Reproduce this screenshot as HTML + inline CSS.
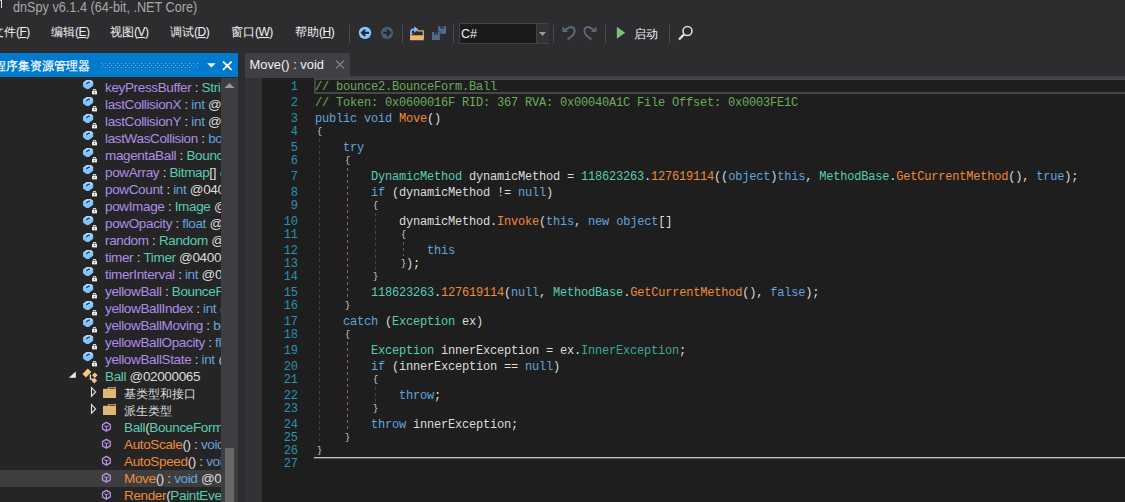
<!DOCTYPE html>
<html><head><meta charset="utf-8"><style>
html,body{margin:0;padding:0}
body{width:1125px;height:502px;overflow:hidden;position:relative;background:#2d2d30;font-family:"Liberation Sans",sans-serif}
.a{position:absolute}
.sep{position:absolute;width:1px;background:#4a4a4f}
.menu{position:absolute;top:23px;font-size:12px;line-height:18px;color:#f1f1f1;white-space:nowrap}
.menu u{text-decoration:underline}
.menu i{font-style:normal;letter-spacing:-0.5px}
.tr{position:absolute;left:0;width:221px;height:17px;overflow:hidden;white-space:nowrap}
.tt{position:absolute;top:0px;font-size:13.5px;letter-spacing:-0.35px;line-height:17px}
.cl{position:absolute;left:315px;white-space:pre;font-family:"Liberation Mono",monospace;font-size:12px;line-height:20px;letter-spacing:-0.2px}
.br{display:inline-block;font-weight:normal;transform:translate(1px,-1px) scale(0.72,0.76);transform-origin:50% 75%}
.ln{position:absolute;left:262.7px;width:35px;text-align:right;font-family:"Liberation Mono",monospace;font-size:12px;line-height:20px;letter-spacing:-0.2px;color:#2b91af}
</style></head><body>

<div class="a" style="left:1px;top:0;width:1.2px;height:8px;background:#e6e6e6"></div><div class="a" style="left:0;top:0;width:2px;height:1px;background:#cfcfcf"></div>
<div class="a" style="left:12.5px;top:0px;font-size:14px;line-height:15px;color:#a8a8a8;transform:scaleX(0.905);transform-origin:0 0;white-space:nowrap">dnSpy v6.1.4 (64-bit, .NET Core)</div>
<div class="menu" style="left:-8px">文件<i>(<u>F</u>)</i></div>
<div class="menu" style="left:51px">编辑<i>(<u>E</u>)</i></div>
<div class="menu" style="left:110px">视图<i>(<u>V</u>)</i></div>
<div class="menu" style="left:170px">调试<i>(<u>D</u>)</i></div>
<div class="menu" style="left:231px">窗口<i>(<u>W</u>)</i></div>
<div class="menu" style="left:295px">帮助<i>(<u>H</u>)</i></div>
<div class="sep" style="left:349px;top:25px;height:18px"></div>
<div class="sep" style="left:402px;top:25px;height:18px"></div>
<div class="sep" style="left:453px;top:25px;height:18px"></div>
<div class="sep" style="left:553px;top:25px;height:18px"></div>
<div class="sep" style="left:605px;top:25px;height:18px"></div>
<div class="sep" style="left:669px;top:25px;height:18px"></div>
<svg class="a" style="left:356px;top:25px" width="18" height="17" viewBox="0 0 18 17">
<circle cx="9" cy="7.85" r="6.2" fill="#86c6fb"/><path d="M13 7.85H6.5M9.2 4.8L6 7.85l3.2 3.05" stroke="#1e2a38" stroke-width="2.1" fill="none"/></svg>
<svg class="a" style="left:378px;top:25px" width="18" height="17" viewBox="0 0 18 17">
<circle cx="9.1" cy="7.85" r="6.1" fill="#4c5d70"/><path d="M5.2 7.85H11.6M8.9 4.8l3.2 3.05-3.2 3.05" stroke="#232a33" stroke-width="2.1" fill="none"/></svg>
<svg class="a" style="left:409px;top:25px" width="16" height="16" viewBox="0 0 16 16">
<path d="M1.7 15V8.6H3.6M8.2 5.8H14.3V10.4" stroke="#e3b06c" stroke-width="1.2" fill="none"/><path d="M1.2 10.2H15.2L14.6 15.2H1.2z" fill="#eab872"/>
<path d="M2 9.6V6.8Q2 4.4 4.5 4.4H6" stroke="#7cc0fa" stroke-width="1.7" fill="none"/><path d="M5.2 1.2L9.3 4.5L5.2 7.8z" fill="#7cc0fa"/></svg>
<svg class="a" style="left:431px;top:25px" width="16" height="16" viewBox="0 0 16 16">
<path d="M7.2 1h7.8v7.8H7.2z" fill="#4f6d8c"/><path d="M9.2 1h3.8v2.6H9.2z" fill="#2d2d30"/><path d="M10.6 1.3h1v1.6h-1z" fill="#4f6d8c"/>
<path d="M0.6 6.6h8.6v8.8H0.6z" fill="#2d2d30"/><path d="M1 7h7.8v8H1z" fill="#4f6d8c"/><path d="M3 7h3.8v2.6H3z" fill="#2d2d30"/><path d="M4.4 7.3h1v1.6h-1z" fill="#4f6d8c"/></svg>
<div class="a" style="left:459px;top:23px;width:90px;height:21px;box-sizing:border-box;border:1px solid #434346;background:#1b1b1c"></div>
<div class="a" style="left:536px;top:24px;width:12px;height:19px;background:#333337;border-left:1px solid #434346"></div>
<svg class="a" style="left:539px;top:32px" width="8" height="5"><path d="M0 0h7l-3.5 4z" fill="#999"/></svg>
<div class="a" style="left:461px;top:26px;font-size:12.5px;line-height:17px;color:#f1f1f1">C#</div>
<svg class="a" style="left:561px;top:25px" width="16" height="16" viewBox="0 0 16 16"><path d="M4.6 5.2Q7.2 1.9 10.4 2Q13.6 2.3 13.6 6.3Q13.4 8.6 11.4 10.6L6.6 14.6" stroke="#56687b" stroke-width="2" fill="none"/><path d="M1.5 1.3V6.9H7.1z" fill="#56687b"/></svg>
<svg class="a" style="left:582px;top:25px" width="16" height="16" viewBox="0 0 16 16"><g transform="translate(16,0) scale(-1,1)"><path d="M4.6 5.2Q7.2 1.9 10.4 2Q13.6 2.3 13.6 6.3Q13.4 8.6 11.4 10.6L6.6 14.6" stroke="#56687b" stroke-width="2" fill="none"/><path d="M1.5 1.3V6.9H7.1z" fill="#56687b"/></g></svg>
<svg class="a" style="left:616px;top:26px" width="10" height="14"><path d="M0.8 0.8L9.2 6.8L0.8 12.8z" fill="#78c378"/></svg>
<div class="a" style="left:634px;top:25px;font-size:12px;line-height:18px;color:#f1f1f1">启动</div>
<svg class="a" style="left:677px;top:25px" width="17" height="16" viewBox="0 0 17 16">
<circle cx="10.5" cy="6" r="4.5" stroke="#dcdcdc" stroke-width="1.6" fill="none"/><path d="M7.3 9.2L2 14.5" stroke="#dcdcdc" stroke-width="2.4"/></svg>
<div class="a" style="left:0;top:53px;width:238px;height:24px;background:#007acc;overflow:hidden">
<div class="a" style="left:-6px;top:5px;font-size:12.2px;line-height:17px;color:#fff;-webkit-text-stroke:0.2px #fff;white-space:nowrap">程序集资源管理器</div>
<svg class="a" style="left:101px;top:10px" width="98" height="5"><defs><pattern id="dp" width="4" height="4" patternUnits="userSpaceOnUse"><rect x="0" y="0" width="1" height="1" fill="#64b2ee"/><rect x="2" y="2" width="1" height="1" fill="#64b2ee"/></pattern></defs><rect width="98" height="5" fill="url(#dp)"/></svg>
<svg class="a" style="left:206.5px;top:9.5px" width="10" height="6"><path d="M0.2 0.2h8.4l-4.2 4.3z" fill="#fff"/></svg>
<svg class="a" style="left:221.5px;top:7.5px" width="11" height="10"><path d="M1 0.6l8.6 8.2M9.6 0.6l-8.6 8.2" stroke="#fff" stroke-width="1.8"/></svg>
</div>
<div class="a" style="left:0;top:77px;width:221px;height:425px;background:#252526"></div>
<div class="a" style="left:221px;top:78px;width:17px;height:424px;background:#3e3e42"></div>
<svg class="a" style="left:224px;top:82px" width="11" height="7"><path d="M0.5 6h10l-5-5z" fill="#999"/></svg>
<div class="a" style="left:225px;top:448px;width:9px;height:54px;background:#686868"></div>
<div class="tr" style="top:79px">
<svg class="a" style="left:82px;top:0px" width="16" height="16" viewBox="0 0 16 16">
<path d="M1 3.8L4.6 1h4.2L11.2 3v3.8L6.8 9.9H4.4L1 7.6z" fill="#7fc3ff"/><path d="M1 3.8L4.6 1h4.2L11.2 3L6.5 5.6z" fill="#a6d6ff"/><path d="M4.2 4.6L7.8 2.9" stroke="#1a3d66" stroke-width="1.5"/>
<path d="M9.3 11.2h6.2v4.6H9.3z" fill="#252526"/><path d="M10 11.8h5v3.6h-5z" fill="#ececec"/><path d="M10.9 10h3.2v1.8h-3.2z" fill="#ececec"/><path d="M11.5 10.8h2v0.9h-2z" fill="#3a3a3a"/><rect x="12.1" y="13" width="0.9" height="0.9" fill="#333"/></svg>
<div class="tt" style="left:105px"><span style="color:#ad8ee6">keyPressBuffer</span><span style="color:#dcdcdc">&#160;:&#160;</span><span style="color:#58ccb4">String&#160;@04000</span></div>
</div>
<div class="tr" style="top:96px">
<svg class="a" style="left:82px;top:0px" width="16" height="16" viewBox="0 0 16 16">
<path d="M1 3.8L4.6 1h4.2L11.2 3v3.8L6.8 9.9H4.4L1 7.6z" fill="#7fc3ff"/><path d="M1 3.8L4.6 1h4.2L11.2 3L6.5 5.6z" fill="#a6d6ff"/><path d="M4.2 4.6L7.8 2.9" stroke="#1a3d66" stroke-width="1.5"/>
<path d="M9.3 11.2h6.2v4.6H9.3z" fill="#252526"/><path d="M10 11.8h5v3.6h-5z" fill="#ececec"/><path d="M10.9 10h3.2v1.8h-3.2z" fill="#ececec"/><path d="M11.5 10.8h2v0.9h-2z" fill="#3a3a3a"/><rect x="12.1" y="13" width="0.9" height="0.9" fill="#333"/></svg>
<div class="tt" style="left:105px"><span style="color:#ad8ee6">lastCollisionX</span><span style="color:#dcdcdc">&#160;:&#160;</span><span style="color:#62a4dc">int</span><span style="color:#dcdcdc">&#160;@04000</span></div>
</div>
<div class="tr" style="top:113px">
<svg class="a" style="left:82px;top:0px" width="16" height="16" viewBox="0 0 16 16">
<path d="M1 3.8L4.6 1h4.2L11.2 3v3.8L6.8 9.9H4.4L1 7.6z" fill="#7fc3ff"/><path d="M1 3.8L4.6 1h4.2L11.2 3L6.5 5.6z" fill="#a6d6ff"/><path d="M4.2 4.6L7.8 2.9" stroke="#1a3d66" stroke-width="1.5"/>
<path d="M9.3 11.2h6.2v4.6H9.3z" fill="#252526"/><path d="M10 11.8h5v3.6h-5z" fill="#ececec"/><path d="M10.9 10h3.2v1.8h-3.2z" fill="#ececec"/><path d="M11.5 10.8h2v0.9h-2z" fill="#3a3a3a"/><rect x="12.1" y="13" width="0.9" height="0.9" fill="#333"/></svg>
<div class="tt" style="left:105px"><span style="color:#ad8ee6">lastCollisionY</span><span style="color:#dcdcdc">&#160;:&#160;</span><span style="color:#62a4dc">int</span><span style="color:#dcdcdc">&#160;@04000</span></div>
</div>
<div class="tr" style="top:130px">
<svg class="a" style="left:82px;top:0px" width="16" height="16" viewBox="0 0 16 16">
<path d="M1 3.8L4.6 1h4.2L11.2 3v3.8L6.8 9.9H4.4L1 7.6z" fill="#7fc3ff"/><path d="M1 3.8L4.6 1h4.2L11.2 3L6.5 5.6z" fill="#a6d6ff"/><path d="M4.2 4.6L7.8 2.9" stroke="#1a3d66" stroke-width="1.5"/>
<path d="M9.3 11.2h6.2v4.6H9.3z" fill="#252526"/><path d="M10 11.8h5v3.6h-5z" fill="#ececec"/><path d="M10.9 10h3.2v1.8h-3.2z" fill="#ececec"/><path d="M11.5 10.8h2v0.9h-2z" fill="#3a3a3a"/><rect x="12.1" y="13" width="0.9" height="0.9" fill="#333"/></svg>
<div class="tt" style="left:105px"><span style="color:#ad8ee6">lastWasCollision</span><span style="color:#dcdcdc">&#160;:&#160;</span><span style="color:#62a4dc">bool</span><span style="color:#dcdcdc">&#160;@04000</span></div>
</div>
<div class="tr" style="top:147px">
<svg class="a" style="left:82px;top:0px" width="16" height="16" viewBox="0 0 16 16">
<path d="M1 3.8L4.6 1h4.2L11.2 3v3.8L6.8 9.9H4.4L1 7.6z" fill="#7fc3ff"/><path d="M1 3.8L4.6 1h4.2L11.2 3L6.5 5.6z" fill="#a6d6ff"/><path d="M4.2 4.6L7.8 2.9" stroke="#1a3d66" stroke-width="1.5"/>
<path d="M9.3 11.2h6.2v4.6H9.3z" fill="#252526"/><path d="M10 11.8h5v3.6h-5z" fill="#ececec"/><path d="M10.9 10h3.2v1.8h-3.2z" fill="#ececec"/><path d="M11.5 10.8h2v0.9h-2z" fill="#3a3a3a"/><rect x="12.1" y="13" width="0.9" height="0.9" fill="#333"/></svg>
<div class="tt" style="left:105px"><span style="color:#ad8ee6">magentaBall</span><span style="color:#dcdcdc">&#160;:&#160;</span><span style="color:#58ccb4">BounceForm</span></div>
</div>
<div class="tr" style="top:164px">
<svg class="a" style="left:82px;top:0px" width="16" height="16" viewBox="0 0 16 16">
<path d="M1 3.8L4.6 1h4.2L11.2 3v3.8L6.8 9.9H4.4L1 7.6z" fill="#7fc3ff"/><path d="M1 3.8L4.6 1h4.2L11.2 3L6.5 5.6z" fill="#a6d6ff"/><path d="M4.2 4.6L7.8 2.9" stroke="#1a3d66" stroke-width="1.5"/>
<path d="M9.3 11.2h6.2v4.6H9.3z" fill="#252526"/><path d="M10 11.8h5v3.6h-5z" fill="#ececec"/><path d="M10.9 10h3.2v1.8h-3.2z" fill="#ececec"/><path d="M11.5 10.8h2v0.9h-2z" fill="#3a3a3a"/><rect x="12.1" y="13" width="0.9" height="0.9" fill="#333"/></svg>
<div class="tt" style="left:105px"><span style="color:#ad8ee6">powArray</span><span style="color:#dcdcdc">&#160;:&#160;</span><span style="color:#58ccb4">Bitmap</span><span style="color:#dcdcdc">[]&#160;@04000</span></div>
</div>
<div class="tr" style="top:181px">
<svg class="a" style="left:82px;top:0px" width="16" height="16" viewBox="0 0 16 16">
<path d="M1 3.8L4.6 1h4.2L11.2 3v3.8L6.8 9.9H4.4L1 7.6z" fill="#7fc3ff"/><path d="M1 3.8L4.6 1h4.2L11.2 3L6.5 5.6z" fill="#a6d6ff"/><path d="M4.2 4.6L7.8 2.9" stroke="#1a3d66" stroke-width="1.5"/>
<path d="M9.3 11.2h6.2v4.6H9.3z" fill="#252526"/><path d="M10 11.8h5v3.6h-5z" fill="#ececec"/><path d="M10.9 10h3.2v1.8h-3.2z" fill="#ececec"/><path d="M11.5 10.8h2v0.9h-2z" fill="#3a3a3a"/><rect x="12.1" y="13" width="0.9" height="0.9" fill="#333"/></svg>
<div class="tt" style="left:105px"><span style="color:#ad8ee6">powCount</span><span style="color:#dcdcdc">&#160;:&#160;</span><span style="color:#62a4dc">int</span><span style="color:#dcdcdc">&#160;@04000</span></div>
</div>
<div class="tr" style="top:198px">
<svg class="a" style="left:82px;top:0px" width="16" height="16" viewBox="0 0 16 16">
<path d="M1 3.8L4.6 1h4.2L11.2 3v3.8L6.8 9.9H4.4L1 7.6z" fill="#7fc3ff"/><path d="M1 3.8L4.6 1h4.2L11.2 3L6.5 5.6z" fill="#a6d6ff"/><path d="M4.2 4.6L7.8 2.9" stroke="#1a3d66" stroke-width="1.5"/>
<path d="M9.3 11.2h6.2v4.6H9.3z" fill="#252526"/><path d="M10 11.8h5v3.6h-5z" fill="#ececec"/><path d="M10.9 10h3.2v1.8h-3.2z" fill="#ececec"/><path d="M11.5 10.8h2v0.9h-2z" fill="#3a3a3a"/><rect x="12.1" y="13" width="0.9" height="0.9" fill="#333"/></svg>
<div class="tt" style="left:105px"><span style="color:#ad8ee6">powImage</span><span style="color:#dcdcdc">&#160;:&#160;</span><span style="color:#58ccb4">Image</span><span style="color:#dcdcdc">&#160;@04000</span></div>
</div>
<div class="tr" style="top:215px">
<svg class="a" style="left:82px;top:0px" width="16" height="16" viewBox="0 0 16 16">
<path d="M1 3.8L4.6 1h4.2L11.2 3v3.8L6.8 9.9H4.4L1 7.6z" fill="#7fc3ff"/><path d="M1 3.8L4.6 1h4.2L11.2 3L6.5 5.6z" fill="#a6d6ff"/><path d="M4.2 4.6L7.8 2.9" stroke="#1a3d66" stroke-width="1.5"/>
<path d="M9.3 11.2h6.2v4.6H9.3z" fill="#252526"/><path d="M10 11.8h5v3.6h-5z" fill="#ececec"/><path d="M10.9 10h3.2v1.8h-3.2z" fill="#ececec"/><path d="M11.5 10.8h2v0.9h-2z" fill="#3a3a3a"/><rect x="12.1" y="13" width="0.9" height="0.9" fill="#333"/></svg>
<div class="tt" style="left:105px"><span style="color:#ad8ee6">powOpacity</span><span style="color:#dcdcdc">&#160;:&#160;</span><span style="color:#62a4dc">float</span><span style="color:#dcdcdc">&#160;@04000</span></div>
</div>
<div class="tr" style="top:232px">
<svg class="a" style="left:82px;top:0px" width="16" height="16" viewBox="0 0 16 16">
<path d="M1 3.8L4.6 1h4.2L11.2 3v3.8L6.8 9.9H4.4L1 7.6z" fill="#7fc3ff"/><path d="M1 3.8L4.6 1h4.2L11.2 3L6.5 5.6z" fill="#a6d6ff"/><path d="M4.2 4.6L7.8 2.9" stroke="#1a3d66" stroke-width="1.5"/>
<path d="M9.3 11.2h6.2v4.6H9.3z" fill="#252526"/><path d="M10 11.8h5v3.6h-5z" fill="#ececec"/><path d="M10.9 10h3.2v1.8h-3.2z" fill="#ececec"/><path d="M11.5 10.8h2v0.9h-2z" fill="#3a3a3a"/><rect x="12.1" y="13" width="0.9" height="0.9" fill="#333"/></svg>
<div class="tt" style="left:105px"><span style="color:#ad8ee6">random</span><span style="color:#dcdcdc">&#160;:&#160;</span><span style="color:#58ccb4">Random</span><span style="color:#dcdcdc">&#160;@04000</span></div>
</div>
<div class="tr" style="top:249px">
<svg class="a" style="left:82px;top:0px" width="16" height="16" viewBox="0 0 16 16">
<path d="M1 3.8L4.6 1h4.2L11.2 3v3.8L6.8 9.9H4.4L1 7.6z" fill="#7fc3ff"/><path d="M1 3.8L4.6 1h4.2L11.2 3L6.5 5.6z" fill="#a6d6ff"/><path d="M4.2 4.6L7.8 2.9" stroke="#1a3d66" stroke-width="1.5"/>
<path d="M9.3 11.2h6.2v4.6H9.3z" fill="#252526"/><path d="M10 11.8h5v3.6h-5z" fill="#ececec"/><path d="M10.9 10h3.2v1.8h-3.2z" fill="#ececec"/><path d="M11.5 10.8h2v0.9h-2z" fill="#3a3a3a"/><rect x="12.1" y="13" width="0.9" height="0.9" fill="#333"/></svg>
<div class="tt" style="left:105px"><span style="color:#ad8ee6">timer</span><span style="color:#dcdcdc">&#160;:&#160;</span><span style="color:#58ccb4">Timer</span><span style="color:#dcdcdc">&#160;@04000</span></div>
</div>
<div class="tr" style="top:266px">
<svg class="a" style="left:82px;top:0px" width="16" height="16" viewBox="0 0 16 16">
<path d="M1 3.8L4.6 1h4.2L11.2 3v3.8L6.8 9.9H4.4L1 7.6z" fill="#7fc3ff"/><path d="M1 3.8L4.6 1h4.2L11.2 3L6.5 5.6z" fill="#a6d6ff"/><path d="M4.2 4.6L7.8 2.9" stroke="#1a3d66" stroke-width="1.5"/>
<path d="M9.3 11.2h6.2v4.6H9.3z" fill="#252526"/><path d="M10 11.8h5v3.6h-5z" fill="#ececec"/><path d="M10.9 10h3.2v1.8h-3.2z" fill="#ececec"/><path d="M11.5 10.8h2v0.9h-2z" fill="#3a3a3a"/><rect x="12.1" y="13" width="0.9" height="0.9" fill="#333"/></svg>
<div class="tt" style="left:105px"><span style="color:#ad8ee6">timerInterval</span><span style="color:#dcdcdc">&#160;:&#160;</span><span style="color:#62a4dc">int</span><span style="color:#dcdcdc">&#160;@04000</span></div>
</div>
<div class="tr" style="top:283px">
<svg class="a" style="left:82px;top:0px" width="16" height="16" viewBox="0 0 16 16">
<path d="M1 3.8L4.6 1h4.2L11.2 3v3.8L6.8 9.9H4.4L1 7.6z" fill="#7fc3ff"/><path d="M1 3.8L4.6 1h4.2L11.2 3L6.5 5.6z" fill="#a6d6ff"/><path d="M4.2 4.6L7.8 2.9" stroke="#1a3d66" stroke-width="1.5"/>
<path d="M9.3 11.2h6.2v4.6H9.3z" fill="#252526"/><path d="M10 11.8h5v3.6h-5z" fill="#ececec"/><path d="M10.9 10h3.2v1.8h-3.2z" fill="#ececec"/><path d="M11.5 10.8h2v0.9h-2z" fill="#3a3a3a"/><rect x="12.1" y="13" width="0.9" height="0.9" fill="#333"/></svg>
<div class="tt" style="left:105px"><span style="color:#ad8ee6">yellowBall</span><span style="color:#dcdcdc">&#160;:&#160;</span><span style="color:#58ccb4">BounceForm</span></div>
</div>
<div class="tr" style="top:300px">
<svg class="a" style="left:82px;top:0px" width="16" height="16" viewBox="0 0 16 16">
<path d="M1 3.8L4.6 1h4.2L11.2 3v3.8L6.8 9.9H4.4L1 7.6z" fill="#7fc3ff"/><path d="M1 3.8L4.6 1h4.2L11.2 3L6.5 5.6z" fill="#a6d6ff"/><path d="M4.2 4.6L7.8 2.9" stroke="#1a3d66" stroke-width="1.5"/>
<path d="M9.3 11.2h6.2v4.6H9.3z" fill="#252526"/><path d="M10 11.8h5v3.6h-5z" fill="#ececec"/><path d="M10.9 10h3.2v1.8h-3.2z" fill="#ececec"/><path d="M11.5 10.8h2v0.9h-2z" fill="#3a3a3a"/><rect x="12.1" y="13" width="0.9" height="0.9" fill="#333"/></svg>
<div class="tt" style="left:105px"><span style="color:#ad8ee6">yellowBallIndex</span><span style="color:#dcdcdc">&#160;:&#160;</span><span style="color:#62a4dc">int</span><span style="color:#dcdcdc">&#160;@04000</span></div>
</div>
<div class="tr" style="top:317px">
<svg class="a" style="left:82px;top:0px" width="16" height="16" viewBox="0 0 16 16">
<path d="M1 3.8L4.6 1h4.2L11.2 3v3.8L6.8 9.9H4.4L1 7.6z" fill="#7fc3ff"/><path d="M1 3.8L4.6 1h4.2L11.2 3L6.5 5.6z" fill="#a6d6ff"/><path d="M4.2 4.6L7.8 2.9" stroke="#1a3d66" stroke-width="1.5"/>
<path d="M9.3 11.2h6.2v4.6H9.3z" fill="#252526"/><path d="M10 11.8h5v3.6h-5z" fill="#ececec"/><path d="M10.9 10h3.2v1.8h-3.2z" fill="#ececec"/><path d="M11.5 10.8h2v0.9h-2z" fill="#3a3a3a"/><rect x="12.1" y="13" width="0.9" height="0.9" fill="#333"/></svg>
<div class="tt" style="left:105px"><span style="color:#ad8ee6">yellowBallMoving</span><span style="color:#dcdcdc">&#160;:&#160;</span><span style="color:#62a4dc">bool</span><span style="color:#dcdcdc">&#160;@04000</span></div>
</div>
<div class="tr" style="top:334px">
<svg class="a" style="left:82px;top:0px" width="16" height="16" viewBox="0 0 16 16">
<path d="M1 3.8L4.6 1h4.2L11.2 3v3.8L6.8 9.9H4.4L1 7.6z" fill="#7fc3ff"/><path d="M1 3.8L4.6 1h4.2L11.2 3L6.5 5.6z" fill="#a6d6ff"/><path d="M4.2 4.6L7.8 2.9" stroke="#1a3d66" stroke-width="1.5"/>
<path d="M9.3 11.2h6.2v4.6H9.3z" fill="#252526"/><path d="M10 11.8h5v3.6h-5z" fill="#ececec"/><path d="M10.9 10h3.2v1.8h-3.2z" fill="#ececec"/><path d="M11.5 10.8h2v0.9h-2z" fill="#3a3a3a"/><rect x="12.1" y="13" width="0.9" height="0.9" fill="#333"/></svg>
<div class="tt" style="left:105px"><span style="color:#ad8ee6">yellowBallOpacity</span><span style="color:#dcdcdc">&#160;:&#160;</span><span style="color:#62a4dc">float</span><span style="color:#dcdcdc">&#160;@04000</span></div>
</div>
<div class="tr" style="top:351px">
<svg class="a" style="left:82px;top:0px" width="16" height="16" viewBox="0 0 16 16">
<path d="M1 3.8L4.6 1h4.2L11.2 3v3.8L6.8 9.9H4.4L1 7.6z" fill="#7fc3ff"/><path d="M1 3.8L4.6 1h4.2L11.2 3L6.5 5.6z" fill="#a6d6ff"/><path d="M4.2 4.6L7.8 2.9" stroke="#1a3d66" stroke-width="1.5"/>
<path d="M9.3 11.2h6.2v4.6H9.3z" fill="#252526"/><path d="M10 11.8h5v3.6h-5z" fill="#ececec"/><path d="M10.9 10h3.2v1.8h-3.2z" fill="#ececec"/><path d="M11.5 10.8h2v0.9h-2z" fill="#3a3a3a"/><rect x="12.1" y="13" width="0.9" height="0.9" fill="#333"/></svg>
<div class="tt" style="left:105px"><span style="color:#ad8ee6">yellowBallState</span><span style="color:#dcdcdc">&#160;:&#160;</span><span style="color:#62a4dc">int</span><span style="color:#dcdcdc">&#160;@04000</span></div>
</div>
<div class="tr" style="top:368px">
<svg class="a" style="left:68px;top:0px" width="9" height="12"><path d="M7.8 3.4V9.8H0.8z" fill="#ececec"/></svg>
<svg class="a" style="left:82px;top:0px" width="16" height="16" viewBox="0 0 16 16">
<path d="M0.4 5.9L5.8 0.5L9.4 4.1L4 9.5z" fill="#f3c68c"/><path d="M12.8 4.4l2.8 2.8-2.8 2.8-2.8-2.8zM12.3 9.8l2.8 2.8-2.8 2.8-2.8-2.8z" fill="#f3c68c"/><path d="M8.4 6.6V11.2H11" stroke="#f5dcb8" stroke-width="1.2" fill="none"/></svg>
<div class="tt" style="left:105px"><span style="color:#58ccb4">Ball</span><span style="color:#dcdcdc">&#160;@02000065</span></div>
</div>
<div class="tr" style="top:385px">
<svg class="a" style="left:90px;top:0px" width="8" height="14"><path d="M1.5 2.7L5.6 6.95L1.5 11.2z" fill="none" stroke="#e6e6e6" stroke-width="1.1"/></svg>
<svg class="a" style="left:102px;top:0px" width="16" height="15" viewBox="0 0 16 15"><path d="M1 3.8h13v9.2H1z" fill="#e2b574"/><path d="M5.4 3.8L6.5 1.9H14V3.8z" fill="#e2b574"/><path d="M7 3.2h6.2" stroke="#2a2218" stroke-width="0.9"/></svg>
<div class="tt" style="left:124px"><span style="color:#dcdcdc;font-size:12px;letter-spacing:0">基类型和接口</span></div>
</div>
<div class="tr" style="top:402px">
<svg class="a" style="left:90px;top:0px" width="8" height="14"><path d="M1.5 2.7L5.6 6.95L1.5 11.2z" fill="none" stroke="#e6e6e6" stroke-width="1.1"/></svg>
<svg class="a" style="left:102px;top:0px" width="16" height="15" viewBox="0 0 16 15"><path d="M1 3.8h13v9.2H1z" fill="#e2b574"/><path d="M5.4 3.8L6.5 1.9H14V3.8z" fill="#e2b574"/><path d="M7 3.2h6.2" stroke="#2a2218" stroke-width="0.9"/></svg>
<div class="tt" style="left:124px"><span style="color:#dcdcdc;font-size:12px;letter-spacing:0">派生类型</span></div>
</div>
<div class="tr" style="top:419px">
<svg class="a" style="left:100px;top:0px" width="14" height="15" viewBox="0 0 14 15">
<path d="M6.4 3.4L10.3 5.6V9.9L6.4 12.1L2.5 9.9V5.6z" fill="none" stroke="#bb93e6" stroke-width="1.25" stroke-linejoin="round"/><path d="M4.3 6.6L6.4 7.9L8.5 6.6M6.4 7.9V11.8" fill="none" stroke="#bb93e6" stroke-width="1.1"/></svg>
<div class="tt" style="left:124px"><span style="color:#58ccb4">Ball</span><span style="color:#dcdcdc">(</span><span style="color:#58ccb4">BounceForm</span></div>
</div>
<div class="tr" style="top:436px">
<svg class="a" style="left:100px;top:0px" width="14" height="15" viewBox="0 0 14 15">
<path d="M6.4 3.4L10.3 5.6V9.9L6.4 12.1L2.5 9.9V5.6z" fill="none" stroke="#bb93e6" stroke-width="1.25" stroke-linejoin="round"/><path d="M4.3 6.6L6.4 7.9L8.5 6.6M6.4 7.9V11.8" fill="none" stroke="#bb93e6" stroke-width="1.1"/></svg>
<div class="tt" style="left:124px"><span style="color:#f08a36">AutoScale</span><span style="color:#dcdcdc">()&#160;:&#160;</span><span style="color:#62a4dc">void</span><span style="color:#dcdcdc">&#160;@0600</span></div>
</div>
<div class="tr" style="top:453px">
<svg class="a" style="left:100px;top:0px" width="14" height="15" viewBox="0 0 14 15">
<path d="M6.4 3.4L10.3 5.6V9.9L6.4 12.1L2.5 9.9V5.6z" fill="none" stroke="#bb93e6" stroke-width="1.25" stroke-linejoin="round"/><path d="M4.3 6.6L6.4 7.9L8.5 6.6M6.4 7.9V11.8" fill="none" stroke="#bb93e6" stroke-width="1.1"/></svg>
<div class="tt" style="left:124px"><span style="color:#f08a36">AutoSpeed</span><span style="color:#dcdcdc">()&#160;:&#160;</span><span style="color:#62a4dc">void</span><span style="color:#dcdcdc">&#160;@0600</span></div>
</div>
<div class="tr" style="top:470px;background:#3e3e40">
<svg class="a" style="left:100px;top:0px" width="14" height="15" viewBox="0 0 14 15">
<path d="M6.4 3.4L10.3 5.6V9.9L6.4 12.1L2.5 9.9V5.6z" fill="none" stroke="#bb93e6" stroke-width="1.25" stroke-linejoin="round"/><path d="M4.3 6.6L6.4 7.9L8.5 6.6M6.4 7.9V11.8" fill="none" stroke="#bb93e6" stroke-width="1.1"/></svg>
<div class="tt" style="left:124px"><span style="color:#f08a36">Move</span><span style="color:#dcdcdc">()&#160;:&#160;</span><span style="color:#62a4dc">void</span><span style="color:#dcdcdc">&#160;@0600</span></div>
</div>
<div class="tr" style="top:487px">
<svg class="a" style="left:100px;top:0px" width="14" height="15" viewBox="0 0 14 15">
<path d="M6.4 3.4L10.3 5.6V9.9L6.4 12.1L2.5 9.9V5.6z" fill="none" stroke="#bb93e6" stroke-width="1.25" stroke-linejoin="round"/><path d="M4.3 6.6L6.4 7.9L8.5 6.6M6.4 7.9V11.8" fill="none" stroke="#bb93e6" stroke-width="1.1"/></svg>
<div class="tt" style="left:124px"><span style="color:#f08a36">Render</span><span style="color:#dcdcdc">(</span><span style="color:#58ccb4">PaintEventArgs</span></div>
</div>
<div class="a" style="left:245px;top:53px;width:105px;height:23px;background:#3f3f46"></div>
<div class="a" style="left:249.5px;top:56px;font-size:12.9px;line-height:18px;color:#f1f1f1">Move() : void</div>
<svg class="a" style="left:335px;top:60px" width="10" height="9"><path d="M1 0.5l8 8M9 0.5l-8 8" stroke="#808080" stroke-width="1.3"/></svg>
<div class="a" style="left:245px;top:76px;width:880px;height:2px;background:#3f3f46"></div>
<div class="a" style="left:245px;top:78px;width:17px;height:424px;background:#333337"></div>
<div class="a" style="left:262px;top:78px;width:863px;height:424px;background:#1e1e1e"></div>
<div class="a" style="left:314px;top:78px;width:830px;height:16px;box-sizing:border-box;border:2px solid #464646"></div>
<div class="a" style="left:314px;top:457px;width:811px;height:1px;background:#c4c4c4"></div>
<div class="a" style="left:314px;top:458px;width:811px;height:1px;background:#555"></div>
<div class="a" style="left:319px;top:139px;width:1px;height:302px;background-image:linear-gradient(#2e4862 50%,transparent 50%);background-size:1px 6px"></div>
<div class="a" style="left:347px;top:168px;width:1px;height:131px;background-image:linear-gradient(#a05a5a 50%,transparent 50%);background-size:1px 6px"></div>
<div class="a" style="left:347px;top:342px;width:1px;height:89px;background-image:linear-gradient(#a05a5a 50%,transparent 50%);background-size:1px 6px"></div>
<div class="a" style="left:375px;top:213px;width:1px;height:58px;background-image:linear-gradient(#36503c 50%,transparent 50%);background-size:1px 6px"></div>
<div class="a" style="left:375px;top:387px;width:1px;height:15px;background-image:linear-gradient(#36503c 50%,transparent 50%);background-size:1px 6px"></div>
<div class="a" style="left:403px;top:242px;width:1px;height:14px;background-image:linear-gradient(#5a5a5a 50%,transparent 50%);background-size:1px 6px"></div>
<div class="ln" style="top:77px">1</div>
<div class="cl" style="top:77px"><span style="color:#6aad5a">//&#160;bounce2.BounceForm.Ball</span></div>
<div class="ln" style="top:93px">2</div>
<div class="cl" style="top:93px"><span style="color:#6aad5a">//&#160;Token:&#160;0x0600016F&#160;RID:&#160;367&#160;RVA:&#160;0x00040A1C&#160;File&#160;Offset:&#160;0x0003FE1C</span></div>
<div class="ln" style="top:109px">3</div>
<div class="cl" style="top:109px"><span style="color:#62a4dc">public</span><span style="color:#dcdcdc">&#160;</span><span style="color:#62a4dc">void</span><span style="color:#dcdcdc">&#160;</span><span style="color:#f08a36">Move</span><span style="color:#dcdcdc">()</span></div>
<div class="ln" style="top:122px">4</div>
<div class="cl" style="top:122px"><span style="color:#dcdcdc"><b class="br">{</b></span></div>
<div class="ln" style="top:138px">5</div>
<div class="cl" style="top:138px"><span style="color:#dcdcdc">&#160;&#160;&#160;&#160;</span><span style="color:#62a4dc">try</span></div>
<div class="ln" style="top:151px">6</div>
<div class="cl" style="top:151px"><span style="color:#dcdcdc">&#160;&#160;&#160;&#160;<b class="br">{</b></span></div>
<div class="ln" style="top:167px">7</div>
<div class="cl" style="top:167px"><span style="color:#dcdcdc">&#160;&#160;&#160;&#160;&#160;&#160;&#160;&#160;</span><span style="color:#58ccb4">DynamicMethod</span><span style="color:#dcdcdc">&#160;dynamicMethod&#160;=&#160;</span><span style="color:#58ccb4">118623263</span><span style="color:#dcdcdc">.</span><span style="color:#f08a36">127619114</span><span style="color:#dcdcdc">((</span><span style="color:#62a4dc">object</span><span style="color:#dcdcdc">)</span><span style="color:#62a4dc">this</span><span style="color:#dcdcdc">,&#160;</span><span style="color:#58ccb4">MethodBase</span><span style="color:#dcdcdc">.</span><span style="color:#f08a36">GetCurrentMethod</span><span style="color:#dcdcdc">(),&#160;</span><span style="color:#62a4dc">true</span><span style="color:#dcdcdc">);</span></div>
<div class="ln" style="top:183px">8</div>
<div class="cl" style="top:183px"><span style="color:#dcdcdc">&#160;&#160;&#160;&#160;&#160;&#160;&#160;&#160;</span><span style="color:#62a4dc">if</span><span style="color:#dcdcdc">&#160;(dynamicMethod&#160;!=&#160;</span><span style="color:#62a4dc">null</span><span style="color:#dcdcdc">)</span></div>
<div class="ln" style="top:196px">9</div>
<div class="cl" style="top:196px"><span style="color:#dcdcdc">&#160;&#160;&#160;&#160;&#160;&#160;&#160;&#160;<b class="br">{</b></span></div>
<div class="ln" style="top:212px">10</div>
<div class="cl" style="top:212px"><span style="color:#dcdcdc">&#160;&#160;&#160;&#160;&#160;&#160;&#160;&#160;&#160;&#160;&#160;&#160;dynamicMethod.</span><span style="color:#f08a36">Invoke</span><span style="color:#dcdcdc">(</span><span style="color:#62a4dc">this</span><span style="color:#dcdcdc">,&#160;</span><span style="color:#62a4dc">new</span><span style="color:#dcdcdc">&#160;</span><span style="color:#62a4dc">object</span><span style="color:#dcdcdc">[]</span></div>
<div class="ln" style="top:225px">11</div>
<div class="cl" style="top:225px"><span style="color:#dcdcdc">&#160;&#160;&#160;&#160;&#160;&#160;&#160;&#160;&#160;&#160;&#160;&#160;<b class="br">{</b></span></div>
<div class="ln" style="top:241px">12</div>
<div class="cl" style="top:241px"><span style="color:#dcdcdc">&#160;&#160;&#160;&#160;&#160;&#160;&#160;&#160;&#160;&#160;&#160;&#160;&#160;&#160;&#160;&#160;</span><span style="color:#62a4dc">this</span></div>
<div class="ln" style="top:254px">13</div>
<div class="cl" style="top:254px"><span style="color:#dcdcdc">&#160;&#160;&#160;&#160;&#160;&#160;&#160;&#160;&#160;&#160;&#160;&#160;<b class="br">}</b>);</span></div>
<div class="ln" style="top:267px">14</div>
<div class="cl" style="top:267px"><span style="color:#dcdcdc">&#160;&#160;&#160;&#160;&#160;&#160;&#160;&#160;<b class="br">}</b></span></div>
<div class="ln" style="top:283px">15</div>
<div class="cl" style="top:283px"><span style="color:#dcdcdc">&#160;&#160;&#160;&#160;&#160;&#160;&#160;&#160;</span><span style="color:#58ccb4">118623263</span><span style="color:#dcdcdc">.</span><span style="color:#f08a36">127619114</span><span style="color:#dcdcdc">(</span><span style="color:#62a4dc">null</span><span style="color:#dcdcdc">,&#160;</span><span style="color:#58ccb4">MethodBase</span><span style="color:#dcdcdc">.</span><span style="color:#f08a36">GetCurrentMethod</span><span style="color:#dcdcdc">(),&#160;</span><span style="color:#62a4dc">false</span><span style="color:#dcdcdc">);</span></div>
<div class="ln" style="top:296px">16</div>
<div class="cl" style="top:296px"><span style="color:#dcdcdc">&#160;&#160;&#160;&#160;<b class="br">}</b></span></div>
<div class="ln" style="top:312px">17</div>
<div class="cl" style="top:312px"><span style="color:#dcdcdc">&#160;&#160;&#160;&#160;</span><span style="color:#62a4dc">catch</span><span style="color:#dcdcdc">&#160;(</span><span style="color:#58ccb4">Exception</span><span style="color:#dcdcdc">&#160;ex)</span></div>
<div class="ln" style="top:325px">18</div>
<div class="cl" style="top:325px"><span style="color:#dcdcdc">&#160;&#160;&#160;&#160;<b class="br">{</b></span></div>
<div class="ln" style="top:341px">19</div>
<div class="cl" style="top:341px"><span style="color:#dcdcdc">&#160;&#160;&#160;&#160;&#160;&#160;&#160;&#160;</span><span style="color:#58ccb4">Exception</span><span style="color:#dcdcdc">&#160;innerException&#160;=&#160;ex.</span><span style="color:#3aa89a">InnerException</span><span style="color:#dcdcdc">;</span></div>
<div class="ln" style="top:357px">20</div>
<div class="cl" style="top:357px"><span style="color:#dcdcdc">&#160;&#160;&#160;&#160;&#160;&#160;&#160;&#160;</span><span style="color:#62a4dc">if</span><span style="color:#dcdcdc">&#160;(innerException&#160;==&#160;</span><span style="color:#62a4dc">null</span><span style="color:#dcdcdc">)</span></div>
<div class="ln" style="top:370px">21</div>
<div class="cl" style="top:370px"><span style="color:#dcdcdc">&#160;&#160;&#160;&#160;&#160;&#160;&#160;&#160;<b class="br">{</b></span></div>
<div class="ln" style="top:386px">22</div>
<div class="cl" style="top:386px"><span style="color:#dcdcdc">&#160;&#160;&#160;&#160;&#160;&#160;&#160;&#160;&#160;&#160;&#160;&#160;</span><span style="color:#62a4dc">throw</span><span style="color:#dcdcdc">;</span></div>
<div class="ln" style="top:399px">23</div>
<div class="cl" style="top:399px"><span style="color:#dcdcdc">&#160;&#160;&#160;&#160;&#160;&#160;&#160;&#160;<b class="br">}</b></span></div>
<div class="ln" style="top:415px">24</div>
<div class="cl" style="top:415px"><span style="color:#dcdcdc">&#160;&#160;&#160;&#160;&#160;&#160;&#160;&#160;</span><span style="color:#62a4dc">throw</span><span style="color:#dcdcdc">&#160;innerException;</span></div>
<div class="ln" style="top:428px">25</div>
<div class="cl" style="top:428px"><span style="color:#dcdcdc">&#160;&#160;&#160;&#160;<b class="br">}</b></span></div>
<div class="ln" style="top:441px">26</div>
<div class="cl" style="top:441px"><span style="color:#dcdcdc"><b class="br">}</b></span></div>
<div class="ln" style="top:454px">27</div>
</body></html>
